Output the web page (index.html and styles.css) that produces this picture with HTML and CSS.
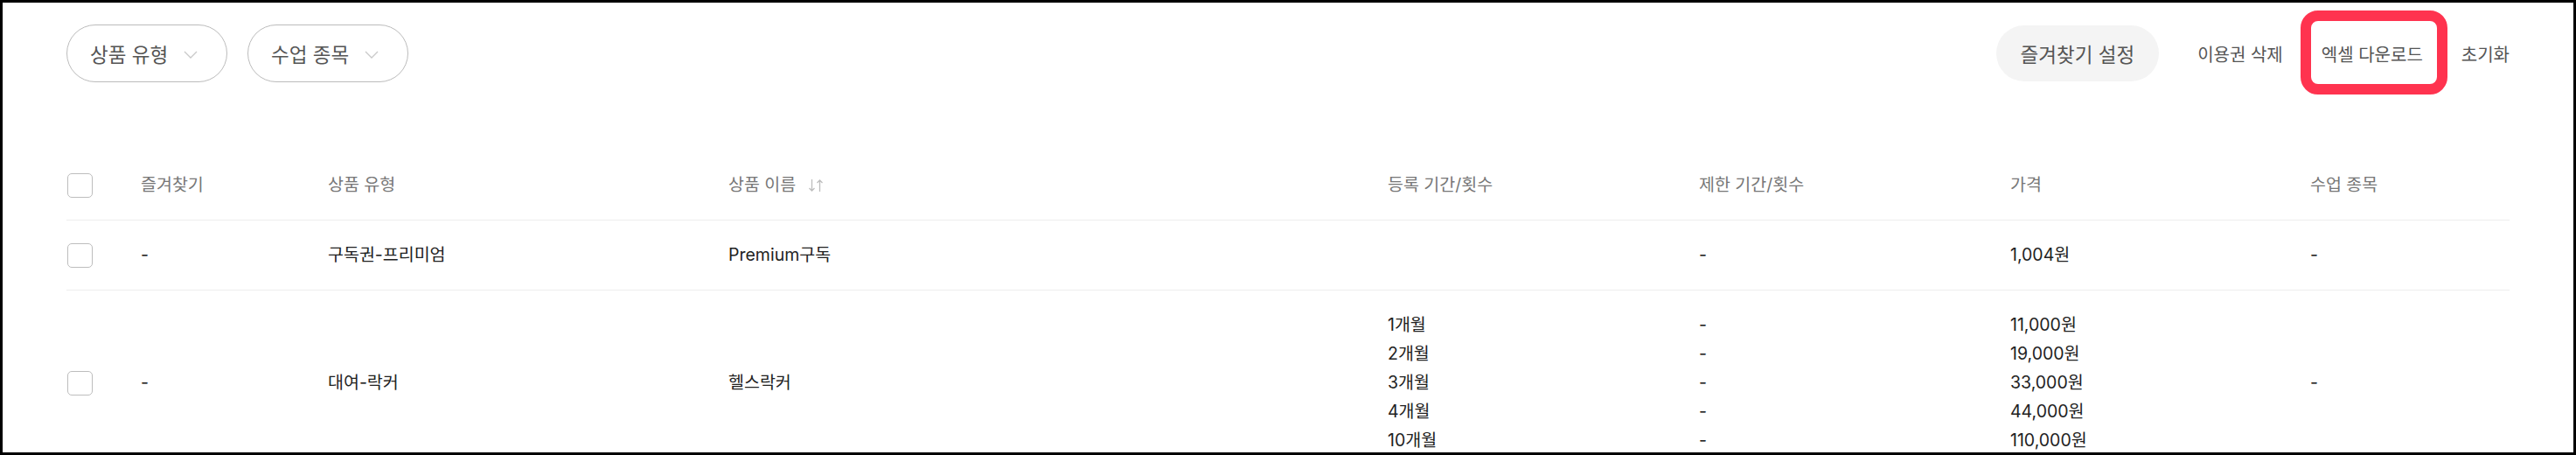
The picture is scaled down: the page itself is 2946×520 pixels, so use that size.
FILE: index.html
```html
<!DOCTYPE html>
<html lang="ko">
<head>
    <meta charset="UTF-8">
    <meta name="viewport" content="width=device-width, initial-scale=1.0">
    <title>이용권 관리</title>
    <link rel="stylesheet" href="styles.css">
</head>
<body>
    <div class="frame">
        <div class="toolbar">
            <div class="filters">
                <button class="filter">상품 유형
                    <svg class="chevron" width="16" height="9" viewBox="0 0 16 9"><polyline points="1,1 8,8 15,1" fill="none" stroke="#c9c9c9" stroke-width="1.3"/></svg>
                </button>
                <button class="filter">수업 종목
                    <svg class="chevron" width="16" height="9" viewBox="0 0 16 9"><polyline points="1,1 8,8 15,1" fill="none" stroke="#c9c9c9" stroke-width="1.3"/></svg>
                </button>
            </div>
            <div class="actions">
                <button class="fav-setting">즐겨찾기 설정</button>
                <button class="text-btn">이용권 삭제</button>
                <button class="text-btn highlight">엑셀 다운로드</button>
                <button class="text-btn">초기화</button>
            </div>
        </div>

        <div class="table">
            <div class="row head">
                <div class="cell"><span class="check"></span></div>
                <div class="cell">즐겨찾기</div>
                <div class="cell">상품 유형</div>
                <div class="cell">상품 이름
                    <svg class="sort" width="18" height="16" viewBox="0 0 18 16">
                        <path d="M4.5 1v13M1.5 11l3 3 3-3" fill="none" stroke="#bdbdbd" stroke-width="1.3"/>
                        <path d="M13.5 15V2M10.5 5l3-3 3 3" fill="none" stroke="#bdbdbd" stroke-width="1.3"/>
                    </svg>
                </div>
                <div class="cell">등록 기간/횟수</div>
                <div class="cell">제한 기간/횟수</div>
                <div class="cell">가격</div>
                <div class="cell">수업 종목</div>
            </div>
            <div class="row">
                <div class="cell"><span class="check"></span></div>
                <div class="cell">-</div>
                <div class="cell">구독권-프리미엄</div>
                <div class="cell">Premium구독</div>
                <div class="cell"></div>
                <div class="cell">-</div>
                <div class="cell">1,004원</div>
                <div class="cell">-</div>
            </div>
            <div class="row">
                <div class="cell"><span class="check"></span></div>
                <div class="cell">-</div>
                <div class="cell">대여-락커</div>
                <div class="cell">헬스락커</div>
                <div class="cell">
                    <div>1개월</div>
                    <div>2개월</div>
                    <div>3개월</div>
                    <div>4개월</div>
                    <div>10개월</div>
                </div>
                <div class="cell">
                    <div>-</div>
                    <div>-</div>
                    <div>-</div>
                    <div>-</div>
                    <div>-</div>
                </div>
                <div class="cell">
                    <div>11,000원</div>
                    <div>19,000원</div>
                    <div>33,000원</div>
                    <div>44,000원</div>
                    <div>110,000원</div>
                </div>
                <div class="cell">-</div>
            </div>
        </div>
    </div>
</body>
</html>
```

FILE: styles.css
```css
* {
    margin: 0;
    padding: 0;
    box-sizing: border-box;
}
body {
    background: #000;
    font-family: Inter, "Noto Sans CJK KR", sans-serif;
    font-size: 19.5px;
    color: #222;
}
button {
    font-family: inherit;
    border: none;
    background: none;
    cursor: pointer;
}
.frame {
    height: 520px;
    border: 3px solid #000;
    background: #fff;
    padding: 25px 73px 0 73px;
    overflow: hidden;
}
.toolbar {
    display: flex;
    justify-content: space-between;
    align-items: center;
    height: 66px;
}
.filters {
    display: flex;
    gap: 23px;
}
.filter {
    display: flex;
    align-items: center;
    gap: 18px;
    width: 184px;
    height: 66px;
    padding: 0 0 0 26px;
    border: 1px solid #bcbcbc;
    border-radius: 33px;
    font-size: 22.5px;
    color: #555;
}
.chevron {
    margin-top: 2px;
}
.actions {
    display: flex;
    align-items: center;
    gap: 44px;
}
.fav-setting {
    height: 64px;
    padding: 0 28px;
    border-radius: 32px;
    background: #f4f4f4;
    font-size: 22.5px;
    color: #555;
}
.text-btn {
    position: relative;
    height: 66px;
    font-size: 20px;
    color: #555;
}
.highlight::after {
    content: "";
    position: absolute;
    left: -24px;
    right: -28px;
    top: -16px;
    bottom: -14px;
    border: 12px solid #ff334f;
    border-radius: 20px;
}
.table {
    margin-top: 78px;
}
.row {
    display: grid;
    grid-template-columns: 85px 214px 458px 754px 356px 356px 343px 1fr;
    border-bottom: 1px solid #eeeeee;
}
.cell {
    display: flex;
    flex-direction: column;
    justify-content: center;
    padding: 23px 0;
    line-height: 33px;
    white-space: nowrap;
}
.head .cell {
    flex-direction: row;
    align-items: center;
    justify-content: flex-start;
    color: #777;
}
.row .cell:first-child {
    flex-direction: row;
    align-items: center;
    justify-content: flex-start;
}
.check {
    display: block;
    width: 29px;
    height: 28px;
    margin-left: 1px;
    border: 1px solid #bdbdbd;
    border-radius: 5px;
}
.sort {
    margin-left: 14px;
}
```
